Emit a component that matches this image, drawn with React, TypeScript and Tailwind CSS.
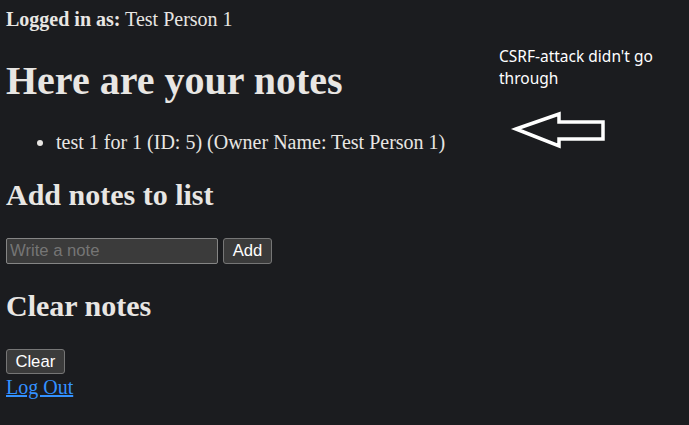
import React from "react";

export default function App() {
    return (
        <div className="relative min-h-[425px] w-full overflow-hidden bg-[#1b1c1f] text-[#e8e6e3] font-['Liberation_Serif',serif] text-[20px] leading-[23px]">
            <div className="pl-[6px] pt-[8px]">
                {/* Header */}
                <div>
                    <b>Logged in as:</b> Test Person 1
                </div>

                <h1 className="my-[26.8px] text-[40px] leading-[46px] font-bold">Here are your notes</h1>

                <ul className="list-disc pl-[50px] my-[20px]">
                    <li>test 1 for 1 (ID: 5) (Owner Name: Test Person 1)</li>
                </ul>

                <h2 className="my-[24.9px] text-[30px] leading-[34.5px] font-bold">Add notes to list</h2>

                <form className="flex items-start gap-[5px]" onSubmit={(e) => e.preventDefault()}>
                    <input
                        type="text"
                        placeholder="Write a note"
                        className="w-[212px] h-[26.4px] rounded-[2px] border border-[#858585] bg-[#3b3b3b] px-[3px] font-['Liberation_Sans',sans-serif] text-[16.67px] text-white placeholder:text-[#757575] outline-none"
                    />
                    <button
                        type="submit"
                        className="w-[49px] h-[26.4px] rounded-[3px] border border-[#767676] bg-[#3b3b3b] font-['Liberation_Sans',sans-serif] text-[16.67px] leading-none text-white"
                    >
                        Add
                    </button>
                </form>

                <h2 className="my-[24.9px] text-[30px] leading-[34.5px] font-bold">Clear notes</h2>

                <div className="h-[27px]">
                    <button className="w-[58.6px] h-[25px] rounded-[3px] border border-[#767676] bg-[#3b3b3b] font-['Liberation_Sans',sans-serif] text-[16.67px] leading-none text-white">
                        Clear
                    </button>
                </div>
                <a href="#" className="text-[#3391ff] underline">Log Out</a>
            </div>

            {/* Annotation over the screenshot */}
            <p className="absolute left-[499px] top-[46px] w-[185px] font-['Noto_Sans',sans-serif] text-[15.5px] leading-[21.6px] text-white">
                CSRF-attack didn't go through
            </p>
            <svg className="absolute left-[510px] top-[108px]" width="100" height="44" viewBox="510 108 100 44">
                <polygon
                    points="516,129 559,114 559,122 603,122 603,139 559,139 559,146"
                    fill="none"
                    stroke="white"
                    strokeWidth="3.5"
                    strokeLinejoin="miter"
                />
            </svg>
        </div>
    );
}
